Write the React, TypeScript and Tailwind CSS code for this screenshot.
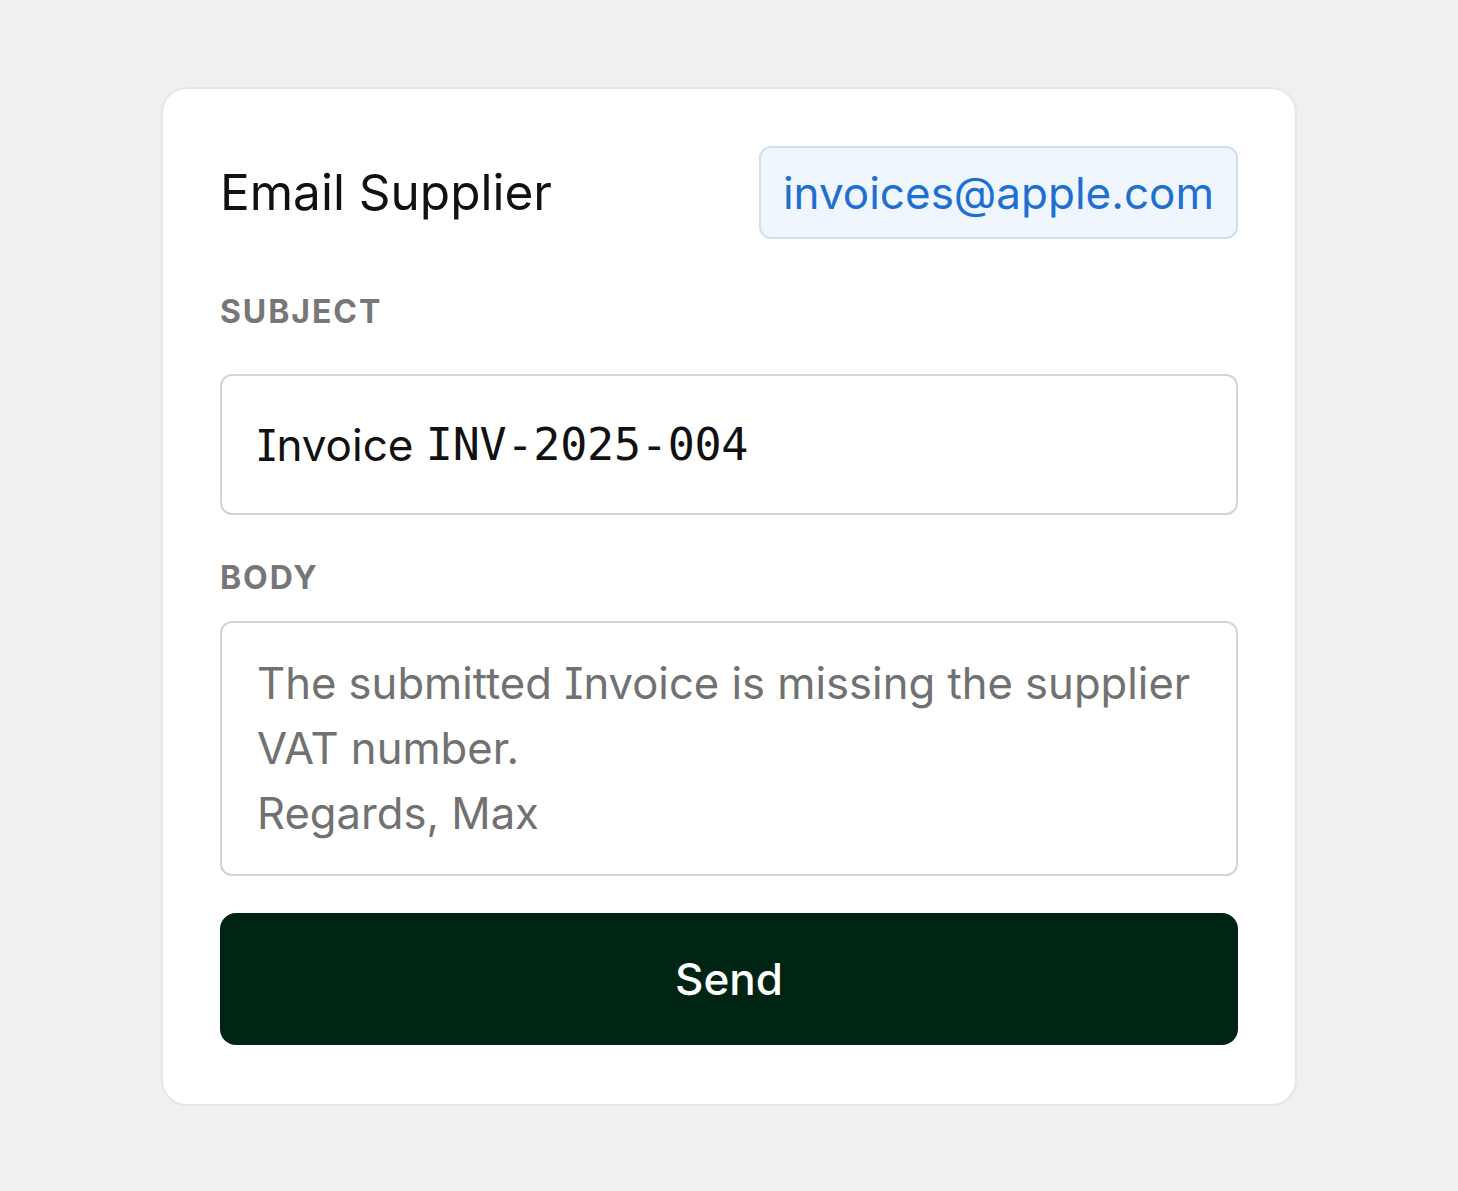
export default function App() {
  return (
    <div className="min-h-screen bg-[#f0f0f0] pt-[87px] pl-[161px] font-['Inter',sans-serif] [font-feature-settings:'cv08']">
      <div className="w-[1136px] rounded-[26px] border-2 border-[#e6e6e6] bg-white p-[57px] pb-[59px]">
        {/* header */}
        <div className="flex h-[93px] items-center justify-between">
          <h1 className="text-[49.5px] font-normal leading-none text-[#111111]">Email Supplier</h1>
          <div className="flex h-[93px] items-center rounded-[12px] border-2 border-[#d5dfe8] bg-[#eff6fe] px-[22px] text-[44px] leading-none text-[#1e6fd0]">
            invoices@apple.com
          </div>
        </div>

        <div className="mt-[57px] text-[32px] font-bold leading-none tracking-[0.06em] text-[#777777]">SUBJECT</div>
        <div className="mt-[46px] flex h-[141px] items-center rounded-[12px] border-2 border-[#d4d4d4] px-[35px] text-[44px] leading-none text-[#111111]">
          <span>Invoice&nbsp;</span>
          <span className="font-['DejaVu_Sans_Mono',monospace] text-[45px] tracking-[-0.005em]">INV-2025-004</span>
        </div>

        <div className="mt-[47px] text-[32px] font-bold leading-none tracking-[0.06em] text-[#777777]">BODY</div>
        <textarea
          readOnly
          className="mt-[27px] block h-[255px] w-full resize-none rounded-[12px] border-2 border-[#d4d4d4] px-[35px] py-[28px] text-[43.6px] leading-[65px] text-[#717171] outline-none"
          defaultValue={'The submitted Invoice is missing the supplier VAT number.\nRegards, Max'}
        />

        <button className="mt-[37px] flex h-[132px] w-full items-center justify-center rounded-[16px] bg-[#002414] text-[44px] font-medium text-white">
          Send
        </button>
      </div>
    </div>
  );
}
